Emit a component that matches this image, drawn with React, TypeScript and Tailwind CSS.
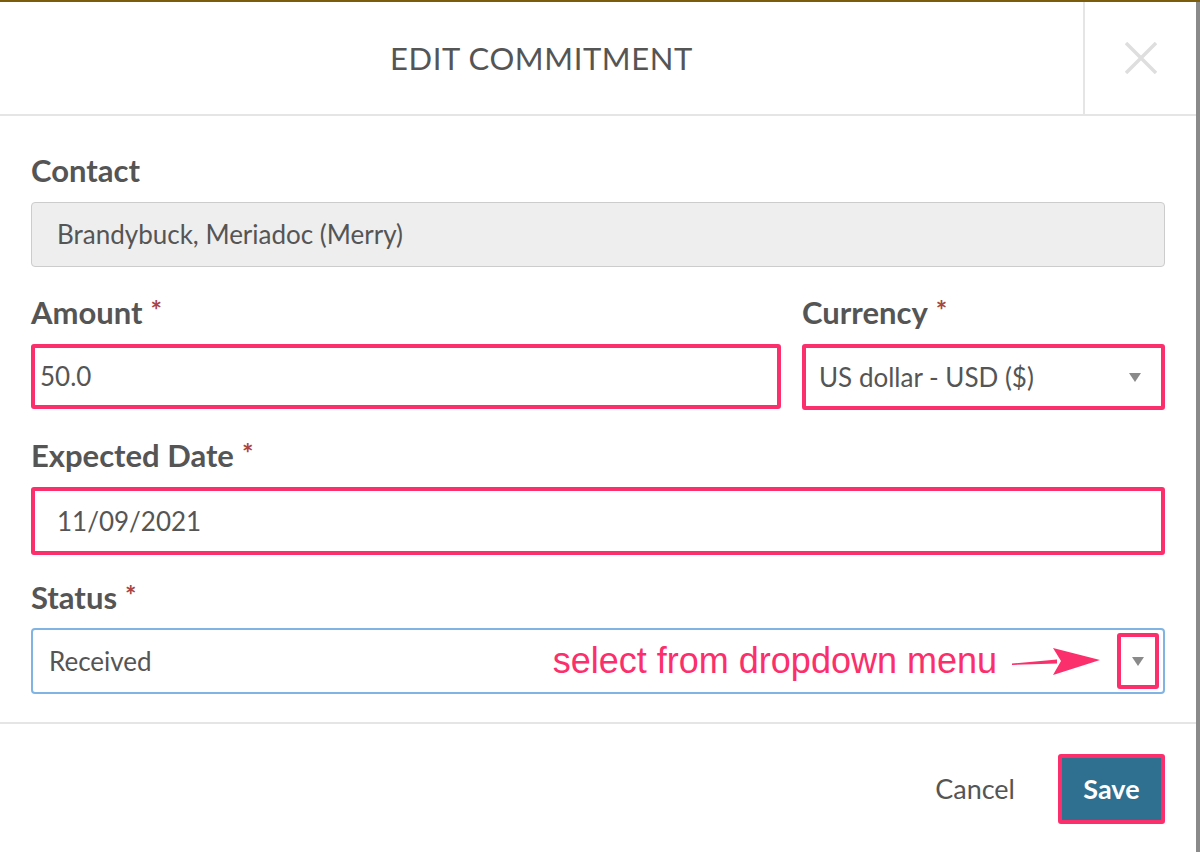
import React from "react";

const font = { fontFamily: "Lato, 'Open Sans', sans-serif" };

function Label({ text }: { text: string }) {
  return (
    <div className="flex items-start h-[32px] text-[31px] leading-[32px] font-bold text-[#555555]">
      <span>{text}</span>
      <span className="ml-[8px] text-[27px] leading-[28px] font-bold text-[#a94442]">*</span>
    </div>
  );
}

function Caret() {
  return (
    <svg width="12" height="9" viewBox="0 0 12 9">
      <polygon points="0,0 12,0 6,9" fill="#8a8a8a" />
    </svg>
  );
}

export default function App() {
  return (
    <div className="w-[1200px] h-[852px] flex flex-col bg-[#8a8a8a] overflow-hidden" style={font}>
      <div className="h-[2px] w-full bg-[#7b5b0c]" />
      <div className="flex flex-1">
        <div className="w-[1196px] bg-white flex flex-col">
          {/* Header */}
          <div className="h-[114px] flex border-b-2 border-[#e5e5e5]">
            <div className="flex-1 flex items-center justify-center">
              <span className="text-[31px] tracking-[0.6px] text-[#555555] uppercase">Edit Commitment</span>
            </div>
            <div className="w-[113px] border-l-2 border-[#e5e5e5] flex items-center justify-center">
              <svg width="32" height="32" viewBox="0 0 32 32">
                <path d="M1 1 L31 31 M31 1 L1 31" stroke="#dedede" strokeWidth="3.5" />
              </svg>
            </div>
          </div>

          {/* Body */}
          <div className="px-[31px] pt-[38px] flex flex-col h-[608px] border-b-2 border-[#e5e5e5]">
            <div className="h-[32px] text-[31px] leading-[32px] font-bold text-[#555555]">Contact</div>
            <div className="mt-[16px] h-[65px] rounded-[4px] border border-[#cccccc] bg-[#eeeeee] flex items-center px-[25px] text-[26px] text-[#555555]">
              Brandybuck, Meriadoc (Merry)
            </div>

            <div className="mt-[29px] flex gap-[21px]">
              <div className="w-[750px] flex flex-col">
                <Label text="Amount" />
                <div className="mt-[16px] h-[65px] rounded-[3px] border-4 border-[#fb2f6c] flex items-center px-[5px] text-[26px] text-[#555555]">
                  50.0
                </div>
              </div>
              <div className="flex-1 flex flex-col">
                <Label text="Currency" />
                <div className="mt-[16px] h-[66px] rounded-[3px] border-4 border-[#fb2f6c] flex items-center justify-between pl-[13px] pr-[20px] text-[26px] text-[#555555]">
                  <span>US dollar - USD ($)</span>
                  <Caret />
                </div>
              </div>
            </div>

            <div className="mt-[29px]">
              <Label text="Expected Date" />
            </div>
            <div className="mt-[16px] h-[68px] rounded-[3px] border-4 border-[#fb2f6c] flex items-center px-[22px] text-[26px] text-[#555555]">
              11/09/2021
            </div>

            <div className="mt-[26px]">
              <Label text="Status" />
            </div>
            <div className="mt-[15px] h-[66px] rounded-[4px] border-2 border-[#80b5e3] flex items-center pl-[16px] pr-[4px] text-[26px] text-[#555555]">
              <span className="flex-1">Received</span>
              <span
                className="text-[36px] leading-[40px] text-[#fb2f6c] mr-[8px]"
                style={{ fontFamily: "'Liberation Sans', Arial, sans-serif" }}
              >
                select from dropdown menu
              </span>
              <svg width="97" height="34" viewBox="0 0 97 34" className="mr-[15px]">
                <path d="M7 19.5 L52 15.5 L52 19.5 L7 21 Z" fill="#fb2f6c" />
                <polygon points="48,4 95,16 48,31 56,17" fill="#fb2f6c" />
              </svg>
              <div className="w-[42px] h-[56px] border-4 border-[#fb2f6c] rounded-[3px] flex items-center justify-center">
                <Caret />
              </div>
            </div>
          </div>

          {/* Footer */}
          <div className="flex-1 flex items-start justify-end pr-[31px] pt-[30px]">
            <div className="flex items-center gap-[43px]">
              <span className="text-[27px] text-[#555555]">Cancel</span>
              <div className="w-[107px] h-[70px] rounded-[3px] border-4 border-[#fb2f6c] bg-[#2f6f8f] flex items-center justify-center text-[27px] font-bold text-white">
                Save
              </div>
            </div>
          </div>
        </div>
        <div className="flex-1 bg-[#8a8a8a]" />
      </div>
    </div>
  );
}
